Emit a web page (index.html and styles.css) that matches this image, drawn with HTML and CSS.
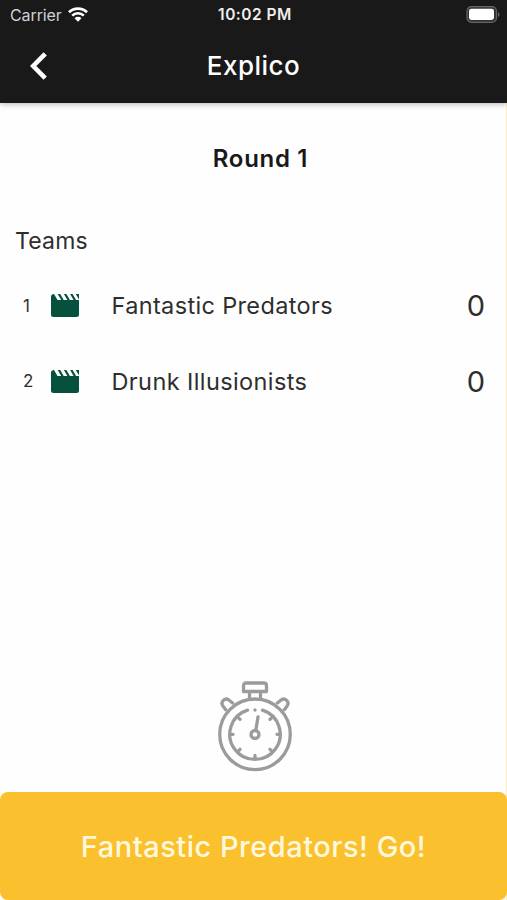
FILE: index.html
```html
<!DOCTYPE html>
<html lang="en">
<head>
<meta charset="utf-8">
<title>Explico</title>
<link rel="stylesheet" href="styles.css">
</head>
<body>
<div class="screen">
  <header class="header">
    <div class="status">
      <div class="carrier"><span class="carrier-name">Carrier</span>
        <svg class="wifi" viewBox="0 0 20 15"><path d="M1 5.2a13 13 0 0 1 18 0M4.2 8.6a8.3 8.3 0 0 1 11.6 0" fill="none" stroke="#fff" stroke-width="2.7"/><path d="M6.5 11.2a5 5 0 0 1 7 0L10 14.8z" fill="#fff"/></svg>
      </div>
      <div class="time">10:02 PM</div>
      <svg class="battery" viewBox="0 0 34 17"><rect x="1" y=".7" width="29.5" height="15.6" rx="4.5" fill="#333" stroke="#666" stroke-width="1.2"/><rect x="3" y="2.8" width="25" height="11.2" rx="2.4" fill="#fff"/><path d="M32 6v5q1.5-.6 1.5-2.5T32 6z" fill="#666"/></svg>
    </div>
    <div class="nav">
      <svg class="back" viewBox="0 0 18 28"><path d="M15.2 1.8 3.2 14l12 12.2" fill="none" stroke="#fff" stroke-width="4.6"/></svg>
      <h1 class="title">Explico</h1>
    </div>
  </header>
  <main class="content">
    <h2 class="round">Round 1</h2>
    <p class="label">Teams</p>
    <ul class="teams">
      <li class="team"><span class="rank">1</span><svg class="clapper" viewBox="0 0 28 23"><path d="M3 0 6.500 6h3.700L6.700 0h2.500l3.500 6h3.700l-3.500-6h2.500l3.500 6h3.700l-3.500-6h2.500l3.500 6h3.200l-3.500-6H28v20.500q0 2.500-2.500 2.500h-23Q0 23 0 20.500v-18Q0 .5 3 0z"/></svg><span class="name">Fantastic Predators</span><span class="score">0</span></li>
      <li class="team"><span class="rank">2</span><svg class="clapper" viewBox="0 0 28 23"><path d="M3 0 6.500 6h3.700L6.700 0h2.500l3.500 6h3.700l-3.500-6h2.500l3.500 6h3.700l-3.500-6h2.500l3.500 6h3.200l-3.500-6H28v20.500q0 2.500-2.500 2.500h-23Q0 23 0 20.500v-18Q0 .5 3 0z"/></svg><span class="name second">Drunk Illusionists</span><span class="score">0</span></li>
    </ul>
    <svg class="stopwatch" viewBox="0 0 76 92">
      <g fill="none" stroke="#9b9b9b" stroke-width="3.300" stroke-linecap="round" stroke-linejoin="round">
        <circle cx="38" cy="54.300" r="35.300"/>
        <path d="M45.500 30.200a25.200 25.200 0 1 1-15 0"/>
        <path d="M29 3h18q2.500 0 2.500 3v5.500h-23V6q0-3 2.500-3zM32.500 11.500V18M43.500 11.500V18"/>
        <path d="M8.700 29.700 5.900 26a4.300 4.300 0 0 1 6-6l3.700 3M67.300 29.700l2.800-3.700a4.300 4.300 0 0 0-6-6l-3.700 3"/>
        <circle cx="38" cy="54.500" r="4"/>
        <path d="M38.800 50.300 41 37"/>
        <path d="M38 30v.1M22 38.300l1 1M54 38.300l-1 1M14.500 54.300H16M61.500 54.300H60M22 70.300l1-1M54 70.300l-1-1M38 78v-2.500"/>
      </g>
    </svg>
  </main>
  <button class="go">Fantastic Predators! Go!</button>
</div>
</body>
</html>
```
FILE: styles.css
```css
* { box-sizing: border-box; }
body { margin: 0; font-family: Inter, sans-serif; color: #2e2e2e; }
.screen { width: 507px; height: 900px; display: flex; flex-direction: column; background: linear-gradient(to left, #fcebc4 1px, #fefefe 1px); overflow: hidden; }
.header { height: 103px; background: #191919; color: #fff; box-shadow: 0 1px 6px rgba(0, 0, 0, .3); }
.status { height: 29px; display: grid; grid-template-columns: 1fr auto 1fr; align-items: center; padding: 0 7px 0 10px; font-size: 16px; }
.carrier { display: flex; align-items: center; gap: 6px; color: #d0d0d0; }
.carrier-name { letter-spacing: -.1px; }
.wifi { width: 20px; height: 15px; }
.time { font-weight: 600; font-size: 15.5px; letter-spacing: .5px; color: #eee; }
.battery { width: 34px; height: 17px; justify-self: end; }
.nav { height: 74px; display: grid; grid-template-columns: 1fr auto 1fr; align-items: center; padding: 0 30px; }
.back { width: 18px; height: 28px; }
.title { margin: 0; font-size: 26px; font-weight: 500; line-height: 32px; letter-spacing: .5px; }
.content { flex: 1; display: flex; flex-direction: column; }
.round { margin: 40px 0 0 14px; text-align: center; font-size: 24px; line-height: 32px; font-weight: 600; letter-spacing: .7px; color: #191919; }
.label { margin: 50px 0 0 15px; font-size: 23px; line-height: 32px; letter-spacing: .2px; }
.teams { list-style: none; margin: 11px 0 0; padding: 0 22px; }
.team { height: 75.5px; display: grid; grid-template-columns: 29px 60px 1fr auto; align-items: center; }
.rank { font-size: 17px; padding-left: 1px; }
.clapper { width: 28px; height: 23px; fill: #05513e; }
.name { font-size: 23.5px; letter-spacing: .35px; padding-left: .5px; }
.second { letter-spacing: .4px; }
.score { font-size: 29px; }
.stopwatch { width: 76px; height: 92px; margin: auto auto 20px 217px; }
.go { height: 108px; border: 0; border-radius: 8px; background: #fbc02d; color: #fff8dc; font: 500 29px Inter, sans-serif; letter-spacing: .5px; padding-top: 1px; }
```
